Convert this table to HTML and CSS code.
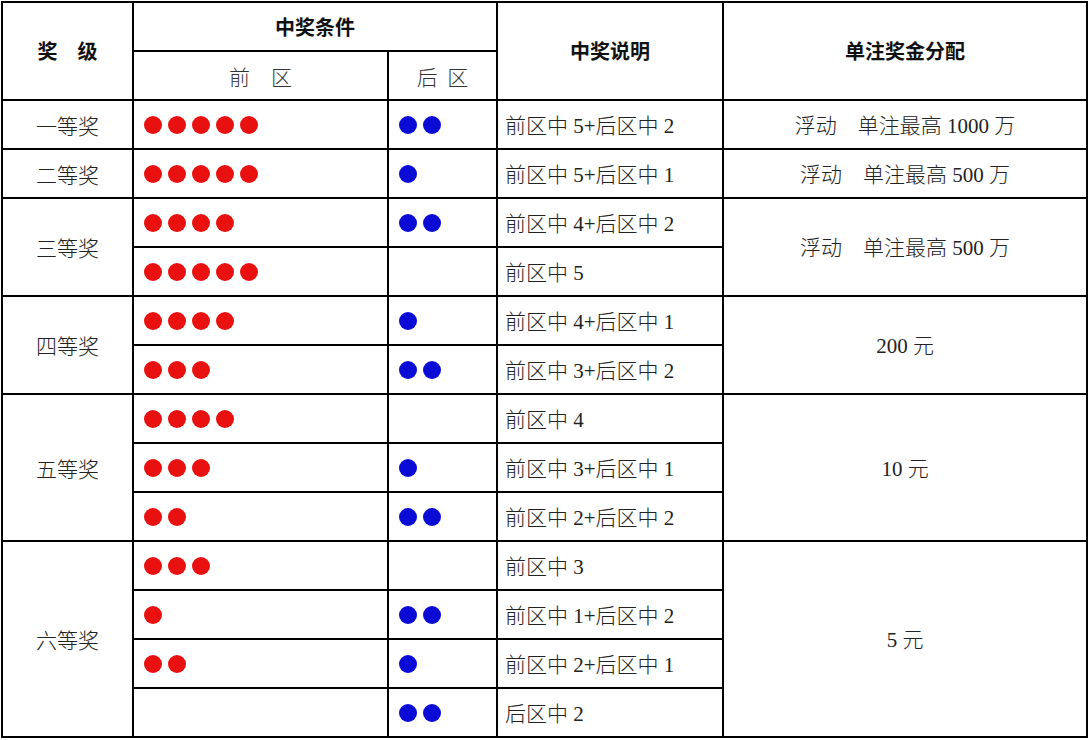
FILE: index.html
```html
<!DOCTYPE html>
<html lang="zh-CN">
<head>
<meta charset="utf-8">
<title>中奖条件</title>
<link rel="stylesheet" href="styles.css">
</head>
<body>
<table class="prize">
  <colgroup>
    <col class="c1"><col class="c2"><col class="c3"><col class="c4"><col class="c5">
  </colgroup>
  <thead>
    <tr>
      <th rowspan="2" class="hd">奖　级</th>
      <th colspan="2" class="hd">中奖条件</th>
      <th rowspan="2" class="hd">中奖说明</th>
      <th rowspan="2" class="hd">单注奖金分配</th>
    </tr>
    <tr>
      <th class="sub">前　区</th>
      <th class="sub">后&nbsp;&nbsp;区</th>
    </tr>
  </thead>
  <tbody>
    <tr>
      <td class="lvl">一等奖</td>
      <td class="balls"><span class="dot r"></span><span class="dot r"></span><span class="dot r"></span><span class="dot r"></span><span class="dot r"></span></td>
      <td class="balls"><span class="dot b"></span><span class="dot b"></span></td>
      <td class="desc">前区中<span class="num"> 5+</span>后区中<span class="num"> 2</span></td>
      <td class="amt">浮动　单注最高<span class="num"> 1000 </span>万</td>
    </tr>
    <tr>
      <td class="lvl">二等奖</td>
      <td class="balls"><span class="dot r"></span><span class="dot r"></span><span class="dot r"></span><span class="dot r"></span><span class="dot r"></span></td>
      <td class="balls"><span class="dot b"></span></td>
      <td class="desc">前区中<span class="num"> 5+</span>后区中<span class="num"> 1</span></td>
      <td class="amt">浮动　单注最高<span class="num"> 500 </span>万</td>
    </tr>
    <tr>
      <td class="lvl" rowspan="2">三等奖</td>
      <td class="balls"><span class="dot r"></span><span class="dot r"></span><span class="dot r"></span><span class="dot r"></span></td>
      <td class="balls"><span class="dot b"></span><span class="dot b"></span></td>
      <td class="desc">前区中<span class="num"> 4+</span>后区中<span class="num"> 2</span></td>
      <td class="amt" rowspan="2">浮动　单注最高<span class="num"> 500 </span>万</td>
    </tr>
    <tr>
      <td class="balls"><span class="dot r"></span><span class="dot r"></span><span class="dot r"></span><span class="dot r"></span><span class="dot r"></span></td>
      <td class="balls"></td>
      <td class="desc">前区中<span class="num"> 5</span></td>
    </tr>
    <tr>
      <td class="lvl" rowspan="2">四等奖</td>
      <td class="balls"><span class="dot r"></span><span class="dot r"></span><span class="dot r"></span><span class="dot r"></span></td>
      <td class="balls"><span class="dot b"></span></td>
      <td class="desc">前区中<span class="num"> 4+</span>后区中<span class="num"> 1</span></td>
      <td class="amt" rowspan="2"><span class="num">200 </span>元</td>
    </tr>
    <tr>
      <td class="balls"><span class="dot r"></span><span class="dot r"></span><span class="dot r"></span></td>
      <td class="balls"><span class="dot b"></span><span class="dot b"></span></td>
      <td class="desc">前区中<span class="num"> 3+</span>后区中<span class="num"> 2</span></td>
    </tr>
    <tr>
      <td class="lvl" rowspan="3">五等奖</td>
      <td class="balls"><span class="dot r"></span><span class="dot r"></span><span class="dot r"></span><span class="dot r"></span></td>
      <td class="balls"></td>
      <td class="desc">前区中<span class="num"> 4</span></td>
      <td class="amt" rowspan="3"><span class="num">10 </span>元</td>
    </tr>
    <tr>
      <td class="balls"><span class="dot r"></span><span class="dot r"></span><span class="dot r"></span></td>
      <td class="balls"><span class="dot b"></span></td>
      <td class="desc">前区中<span class="num"> 3+</span>后区中<span class="num"> 1</span></td>
    </tr>
    <tr>
      <td class="balls"><span class="dot r"></span><span class="dot r"></span></td>
      <td class="balls"><span class="dot b"></span><span class="dot b"></span></td>
      <td class="desc">前区中<span class="num"> 2+</span>后区中<span class="num"> 2</span></td>
    </tr>
    <tr>
      <td class="lvl" rowspan="4">六等奖</td>
      <td class="balls"><span class="dot r"></span><span class="dot r"></span><span class="dot r"></span></td>
      <td class="balls"></td>
      <td class="desc">前区中<span class="num"> 3</span></td>
      <td class="amt" rowspan="4"><span class="num">5 </span>元</td>
    </tr>
    <tr>
      <td class="balls"><span class="dot r"></span></td>
      <td class="balls"><span class="dot b"></span><span class="dot b"></span></td>
      <td class="desc">前区中<span class="num"> 1+</span>后区中<span class="num"> 2</span></td>
    </tr>
    <tr>
      <td class="balls"><span class="dot r"></span><span class="dot r"></span></td>
      <td class="balls"><span class="dot b"></span></td>
      <td class="desc">前区中<span class="num"> 2+</span>后区中<span class="num"> 1</span></td>
    </tr>
    <tr>
      <td class="balls"></td>
      <td class="balls"><span class="dot b"></span><span class="dot b"></span></td>
      <td class="desc">后区中<span class="num"> 2</span></td>
    </tr>
  </tbody>
</table>
</body>
</html>
```

FILE: styles.css
```css
html, body {
  margin: 0;
  padding: 0;
  background: #ffffff;
}

body {
  padding: 1px 0 0 1px;
}

.prize {
  border-collapse: collapse;
  table-layout: fixed;
  width: 1087px;
  font-family: "Noto Sans CJK SC", sans-serif;
  font-size: 21px;
  font-weight: 300;
  color: #222222;
}

.c1 { width: 131px; }
.c2 { width: 255px; }
.c3 { width: 109px; }
.c4 { width: 226px; }
.c5 { width: 364px; }

.prize th,
.prize td {
  border: 2px solid #000000;
  padding: 0;
  height: 47px;
  line-height: 24px;
  vertical-align: middle;
  white-space: pre;
}

.num {
  font-family: "Liberation Serif", "Times New Roman", serif;
  font-weight: 400;
  font-size: 21px;
}

.prize th.hd {
  font-family: "Noto Sans CJK SC", sans-serif;
  font-weight: 700;
  font-size: 20px;
  color: #111111;
  text-align: center;
}

.prize th.sub {
  font-weight: 300;
  text-align: center;
  color: #333333;
}

.lvl {
  text-align: center;
}

.amt {
  text-align: center;
}

.desc {
  text-align: left;
  padding-left: 7px !important;
}

.balls {
  padding-left: 10px !important;
  font-size: 0;
}

.dot {
  display: inline-block;
  width: 18px;
  height: 18px;
  border-radius: 50%;
  margin-right: 6px;
  vertical-align: middle;
}

.dot.r { background: #e8110f; }
.dot.b { background: #0b0bd6; }
```
